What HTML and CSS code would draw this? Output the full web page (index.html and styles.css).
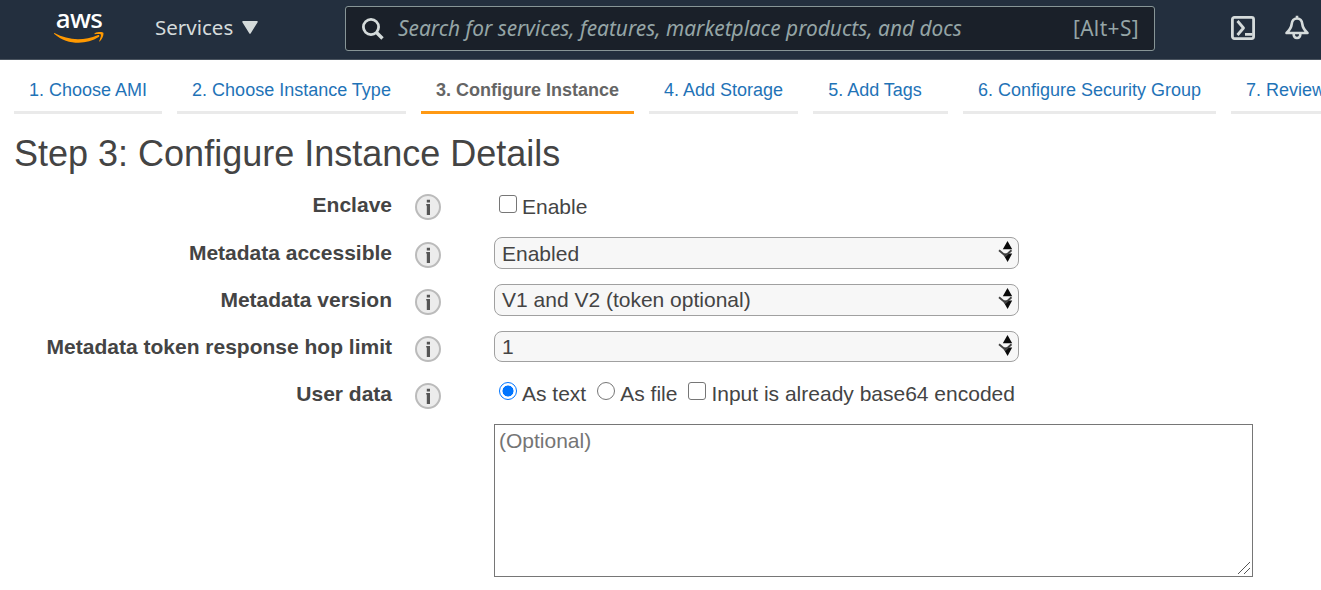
FILE: index.html
```
<!DOCTYPE html>
<html lang="en">
<head>
<meta charset="utf-8">
<title>Configure Instance Details</title>
<link rel="stylesheet" href="styles.css">
</head>
<body>
<svg class="defs" width="0" height="0">
  <symbol id="info" viewBox="0 0 28 28">
    <circle cx="14" cy="14" r="12" fill="#ececec" stroke="#bbb" stroke-width="2"/>
    <path d="M12.800 6.800h3.200v2.600h-3.200zM12.200 11h3.800v11h-3.200v-9.600h-.6z" fill="#555"/>
  </symbol>
  <symbol id="arrows" viewBox="0 0 16 22">
    <path d="M9.500 0l4.700 8.200H4.800zM4.800 12.500h9.400L9.600 21z" fill="#0a0a0a"/>
    <path d="M1 9.300l6.500 5.500 6-5.500" fill="none" stroke="#444" stroke-width="1.900"/>
  </symbol>
</svg>
<header class="topbar">
  <div class="logo">
    <span class="logo-text">aws</span>
    <svg class="smile" width="50" height="12" viewBox="0 0 50 12">
      <path d="M.5 1.100C14 8.700 30 9 43.500 3.200c1.800-.6 2.600.8 1.200 1.900C32 13.300 13 13 .3 1.900-.2 1.300 0 .9.500 1.100z" fill="#f90"/>
      <path d="M40.800 1.200C43.500-.2 48.600-.2 49.300.8c.7 1.600-.7 6.200-3.400 8.500-.5.400-.9.100-.6-.5.900-2.100 2-5.400 1.500-6.200-.6-.8-3.900-.6-5.800-.4-.8.100-.9-.6-.2-1z" fill="#f90"/>
    </svg>
  </div>
  <div class="services"><span class="services-text">Services</span>
    <svg width="16" height="13" viewBox="0 0 16 13"><path d="M1 .8h14L8 12z" fill="#d5dbdb" stroke="#d5dbdb" stroke-width="1.500" stroke-linejoin="round"/></svg>
  </div>
  <div class="search">
    <svg width="24" height="24" viewBox="0 0 24 24" fill="none" stroke="#d5dbdb"><circle cx="10" cy="10" r="7.600" stroke-width="2.800"/><path d="M15.500 15.500l6 6" stroke-width="3.300"/></svg>
    <span class="search-text">Search for services, features, marketplace products, and docs</span>
    <span class="shortcut">[Alt+S]</span>
  </div>
  <svg class="shell" width="26" height="26" viewBox="0 0 26 26" fill="none" stroke="#d5dbdb" stroke-width="2.800"><rect x="2.400" y="2.400" width="21.200" height="21.200" rx="2"/><path d="M7.500 6l6 7-6 7M15 19.300h7.500" stroke-linejoin="round"/></svg>
  <svg class="bell" width="26" height="26" viewBox="0 0 26 26" fill="none" stroke="#d5dbdb" stroke-width="2.600" stroke-linejoin="round"><path d="M13 3.500c-3.800 0-5 2.500-5.300 5.500-.4 4-2 6-5.200 9h21c-3.200-3-4.800-5-5.200-9-.3-3-1.500-5.500-5.300-5.500zM13 3.500V.8M9.600 18.500c0 2.800 1.400 4.500 3.400 4.500s3.400-1.700 3.400-4.500"/></svg>
</header>
<nav class="tabs">
  <a class="tab t1">1. Choose AMI</a>
  <a class="tab t2">2. Choose Instance Type</a>
  <a class="tab t3 active">3. Configure Instance</a>
  <a class="tab t4">4. Add Storage</a>
  <a class="tab t5">5. Add Tags</a>
  <a class="tab t6">6. Configure Security Group</a>
  <a class="tab t7">7. Review</a>
</nav>
<main>
  <h1>Step 3: Configure Instance Details</h1>
  <div class="form">
    <div class="row first"><label>Enclave</label><svg class="info"><use href="#info"/></svg>
      <div class="options"><span class="check"></span><span>Enable</span></div></div>
    <div class="row"><label>Metadata accessible</label><svg class="info"><use href="#info"/></svg>
      <div class="select"><span>Enabled</span><svg class="arrows"><use href="#arrows"/></svg></div></div>
    <div class="row"><label>Metadata version</label><svg class="info"><use href="#info"/></svg>
      <div class="select raised"><span>V1 and V2 (token optional)</span><svg class="arrows"><use href="#arrows"/></svg></div></div>
    <div class="row"><label>Metadata token response hop limit</label><svg class="info"><use href="#info"/></svg>
      <div class="select raised short"><span>1</span><svg class="arrows"><use href="#arrows"/></svg></div></div>
    <div class="row last"><label>User data</label><svg class="info"><use href="#info"/></svg>
      <div class="options"><span class="radio on"></span><span class="o-text">As text</span><span class="radio"></span><span class="o-file">As file</span><span class="check"></span><span>Input is already base64 encoded</span></div></div>
  </div>
  <div class="textarea"><span>(Optional)</span>
    <svg class="grip" width="14" height="14" viewBox="0 0 14 14" stroke="#555"><path d="M1 13L13 1M7 13l6-6" fill="none"/></svg>
  </div>
</main>
</body>
</html>
```
FILE: styles.css
```
* { box-sizing: border-box; }
body { margin: 0; width: 1321px; height: 590px; overflow: hidden; background: #fff; color: #444; font-family: "Liberation Sans", Arial, sans-serif; }
.defs { display: block; }
.topbar { height: 60px; background: #232f3e; border-bottom: 1px solid #4a545f; display: flex; align-items: flex-start; font-family: "Noto Sans", sans-serif; color: #d5dbdb; white-space: nowrap; overflow: hidden; }
.logo { margin: 6px 0 0 54px; width: 50px; height: 40px; display: flex; flex-direction: column; align-items: center; }
.logo-text { color: #fff; font-family: "Noto Sans", sans-serif; font-weight: 500; font-size: 26px; line-height: 24px; letter-spacing: -0.7px; height: 26px; }
.smile { flex: none; }
.services { margin: 14px 0 0 51px; width: 190px; display: flex; align-items: center; gap: 9px; font-size: 20.500px; line-height: 26px; }
.services-text { width: 78px; }
.search { margin-top: 6px; width: 810px; height: 45px; background: #1a2029; border: 1px solid #879596; border-radius: 3px; display: flex; align-items: center; padding: 0 15px; font-size: 20.850px; color: #95a5a6; }
.search-text { margin: -2px 0 0 13px; font-style: italic; }
.shortcut { margin: -2px 0 0 auto; letter-spacing: 0.4px; }
.shell { margin: 15px 0 0 75px; flex: none; }
.bell { margin: 15px 0 0 28px; flex: none; }
.tabs { display: flex; gap: 15px; padding-left: 14px; height: 54px; overflow: hidden; }
.tab { flex: none; height: 54px; border-bottom: 3px solid #eaeaea; color: #1f73b7; font-size: 18px; line-height: 60px; text-align: center; white-space: nowrap; }
.tab.active { border-color: #ff9914; color: #656565; font-weight: bold; }
.t1 { width: 148px; } .t2 { width: 229px; } .t3 { width: 213px; } .t4 { width: 149px; } .t6 { width: 253px; }
.t5 { width: 135px; padding-right: 11px; }
.t7 { width: 90px; text-align: left; padding-left: 15px; }
h1 { margin: 18px 0 0 14px; font-size: 36px; line-height: 44px; font-weight: normal; white-space: nowrap; }
.form { padding-top: 7px; }
.row { display: grid; grid-template-columns: 392px 102px 1fr; height: 47px; font-size: 21px; white-space: nowrap; }
.row.first { height: 48px; }
.row.last { height: 51px; }
.row label { text-align: right; font-weight: bold; line-height: 43px; }
.info { width: 28px; height: 28px; margin: 9.500px 0 0 21.500px; }
.options { display: flex; align-items: flex-start; line-height: 47px; padding-left: 5px; }
.last .options { line-height: 43px; }
.check, .radio { flex: none; width: 18px; height: 18px; border: 1.500px solid #767676; border-radius: 3px; margin: 12px 5px 0 0; }
.last .check, .last .radio { margin-top: 10px; }
.radio { border-radius: 50%; }
.radio.on { border-color: #0075ff; background: radial-gradient(circle, #0075ff 0 5.200px, #fff 5.800px); }
.o-text, .o-file { margin-right: 11px; }
.select { width: 525px; height: 32px; margin-top: 6px; border: 1px solid #a0a0a0; border-radius: 8px; background: #f7f7f7; display: flex; justify-content: space-between; align-items: flex-start; padding: 0 4px 0 7px; line-height: 31px; }
.select.raised { line-height: 29px; }
.select.short { height: 31px; }
.arrows { width: 16px; height: 22px; margin-top: 3px; }
.textarea { margin: 1px 0 0 494px; width: 759px; height: 153px; border: 1px solid #767676; color: #757575; font-size: 21px; line-height: 31px; padding: 0 1px 1px 4px; display: flex; justify-content: space-between; }
.grip { align-self: flex-end; }
```
